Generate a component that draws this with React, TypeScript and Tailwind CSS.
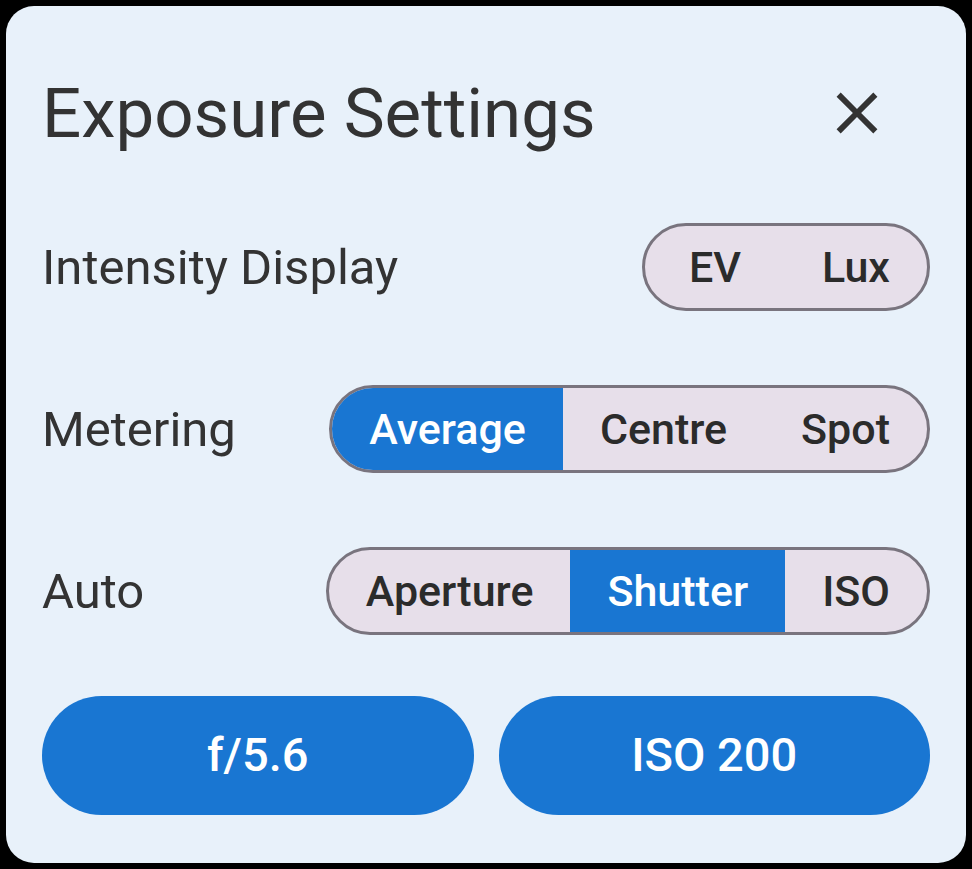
import { useState } from "react";

const segBase =
    "h-full min-w-[140px] flex items-center justify-center px-[37px] text-[43px] font-medium leading-none";

function Segmented({
    options,
    value,
    onChange,
}: {
    options: string[];
    value: string | null;
    onChange: (v: string) => void;
}) {
    return (
        <div className="h-[88px] flex rounded-full border-[3px] border-[#79747e] bg-[#e7dfea] overflow-hidden">
            {options.map((opt) => (
                <button
                    key={opt}
                    onClick={() => onChange(opt)}
                    className={
                        segBase +
                        (value === opt ? " bg-[#1976d2] text-white" : " text-[#2b2b2b]")
                    }
                >
                    {opt}
                </button>
            ))}
        </div>
    );
}

export default function App() {
    const [display, setDisplay] = useState<string | null>(null);
    const [metering, setMetering] = useState<string | null>("Average");
    const [auto, setAuto] = useState<string | null>("Shutter");

    return (
        <div
            className="w-[972px] h-[869px] bg-black p-[6px]"
            style={{ fontFamily: "Roboto, 'Liberation Sans', sans-serif" }}
        >
            <div className="h-full rounded-[28px] bg-[#e8f1fa] px-9 pt-[64px] flex flex-col">
                {/* header */}
                <div className="h-[86px] flex items-center justify-between">
                    <h1 className="text-[69px] leading-none text-[#333333] font-normal">
                        Exposure Settings
                    </h1>
                    <button className="mr-[38px] text-[#333333]">
                        <svg width="70" height="70" viewBox="0 0 24 24" fill="currentColor">
                            <path d="M19 6.41L17.59 5 12 10.59 6.41 5 5 6.41 10.59 12 5 17.59 6.41 19 12 13.41 17.59 19 19 17.59 13.41 12z" />
                        </svg>
                    </button>
                </div>

                <div className="mt-[67px] h-[88px] flex items-center justify-between">
                    <span className="text-[49px] leading-none text-[#333333]">Intensity Display</span>
                    <Segmented options={["EV", "Lux"]} value={display} onChange={setDisplay} />
                </div>

                <div className="mt-[74px] h-[88px] flex items-center justify-between">
                    <span className="text-[49px] leading-none text-[#333333]">Metering</span>
                    <Segmented
                        options={["Average", "Centre", "Spot"]}
                        value={metering}
                        onChange={setMetering}
                    />
                </div>

                <div className="mt-[74px] h-[88px] flex items-center justify-between">
                    <span className="text-[49px] leading-none text-[#333333]">Auto</span>
                    <Segmented
                        options={["Aperture", "Shutter", "ISO"]}
                        value={auto}
                        onChange={setAuto}
                    />
                </div>

                <div className="mt-[61px] grid grid-cols-2 gap-[25px]">
                    <button className="h-[119px] rounded-full bg-[#1976d2] text-white text-[47px] font-medium">
                        f/5.6
                    </button>
                    <button className="h-[119px] rounded-full bg-[#1976d2] text-white text-[47px] font-medium">
                        ISO 200
                    </button>
                </div>
            </div>
        </div>
    );
}
